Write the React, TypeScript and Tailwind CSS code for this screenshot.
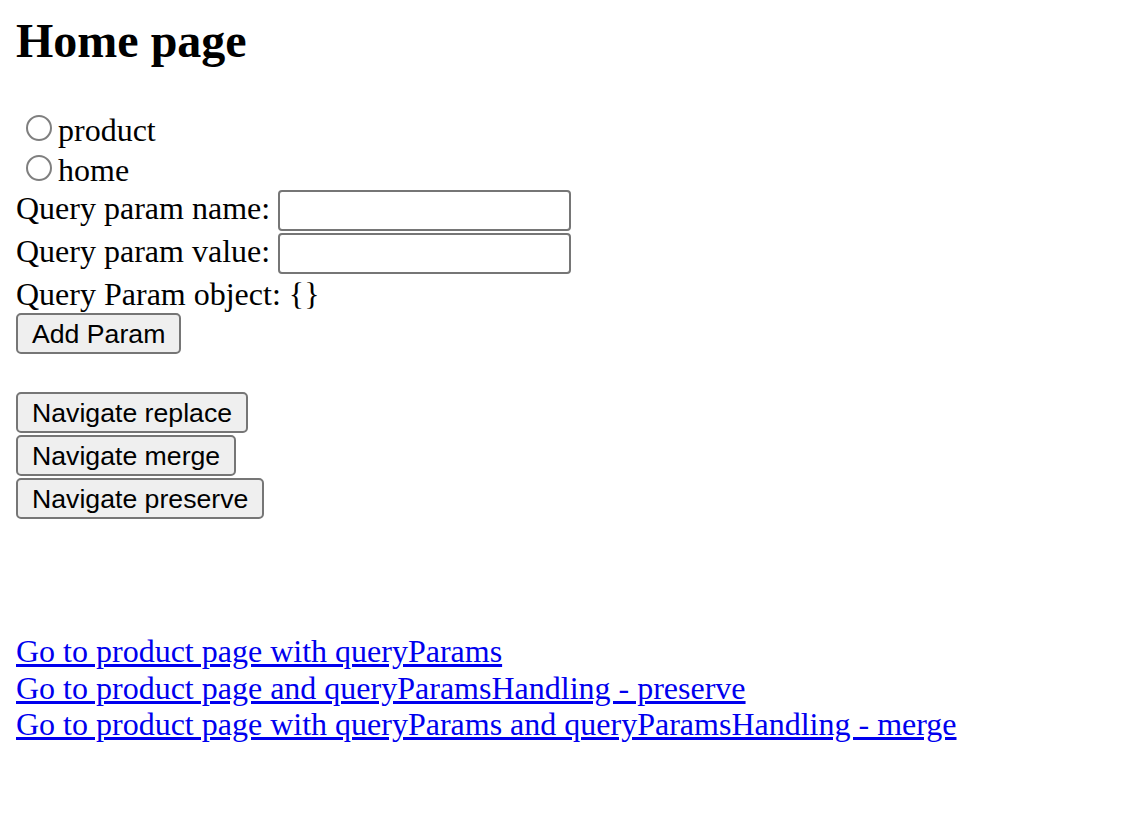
import React from "react";

const btn =
  "block h-[41px] px-[14px] border-2 border-[#767676] rounded-[5px] bg-[#efefef] text-black text-[26.67px] leading-[30px] font-['Liberation_Sans',Arial,sans-serif]";

const radio =
  "appearance-none inline-block align-baseline w-[26px] h-[26px] ml-[10px] mr-[6px] rounded-full border-2 border-[#7f7f7f] bg-white";

export default function App() {
  return (
    <div className="min-h-[818px] w-full bg-white text-black pl-4 font-['Liberation_Serif','Times_New_Roman',serif] text-[32px]">
      <h2 className="pt-[13px] text-[48px] leading-[55px] font-bold">Home page</h2>

      <div className="mt-[43px]">
        <div className="h-[39px] leading-[39px] whitespace-nowrap">
          <input type="radio" name="page" className={radio} />
          product
        </div>
        <div className="h-[40px] leading-[40px] whitespace-nowrap">
          <input type="radio" name="page" className={radio} />
          home
        </div>
      </div>

      <div className="flex h-[43px] items-start whitespace-nowrap">
        <span className="leading-[36px]">Query param name:</span>
        <input
          type="text"
          className="ml-[8px] h-[41px] w-[293px] border-2 border-[#767676] rounded-[4px] bg-white"
        />
      </div>
      <div className="flex h-[43px] items-start whitespace-nowrap">
        <span className="leading-[36px]">Query param value:</span>
        <input
          type="text"
          className="ml-[8px] h-[41px] w-[293px] border-2 border-[#767676] rounded-[4px] bg-white"
        />
      </div>
      <div className="h-[37px] leading-[36px] whitespace-nowrap">Query Param object: {"{}"}</div>

      <div>
        <button className={btn}>Add Param</button>
      </div>

      <div className="mt-[38px] flex flex-col items-start gap-[2px]">
        <button className={btn}>Navigate replace</button>
        <button className={btn}>Navigate merge</button>
        <button className={btn}>Navigate preserve</button>
      </div>

      <div className="mt-[114px] flex flex-col items-start leading-[36.5px]">
        <a href="#" className="text-[#0000ee] underline">Go to product page with queryParams</a>
        <a href="#" className="text-[#0000ee] underline">Go to product page and queryParamsHandling - preserve</a>
        <a href="#" className="text-[#0000ee] underline">Go to product page with queryParams and queryParamsHandling - merge</a>
      </div>
    </div>
  );
}
